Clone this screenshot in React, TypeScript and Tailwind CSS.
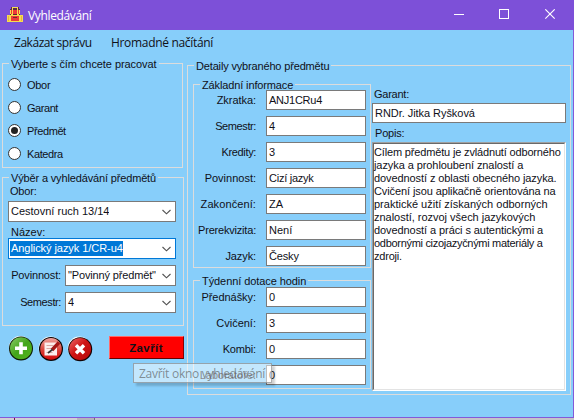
import React from "react";

type GroupProps = { title: string; tracking: string; className: string; children: React.ReactNode };

function Group({ title, tracking, className, children }: GroupProps) {
  return (
    <fieldset className={`min-w-0 border border-[#dcdcdc] ${className}`}>
      <legend className={`ml-[6px] h-[13px] whitespace-nowrap px-[2px] leading-[15px] ${tracking}`}>{title}</legend>
      {children}
    </fieldset>
  );
}

function Radio({ label, tracking, checked = false }: { label: string; tracking: string; checked?: boolean }) {
  return (
    <label className="flex h-[23px] items-center gap-[6px]">
      <span className="flex size-[13px] items-center justify-center rounded-full border border-[#333] bg-white">
        {checked && <span className="size-[7px] rounded-full bg-[#222]" />}
      </span>
      <span className={`pt-[2px] ${tracking}`}>{label}</span>
    </label>
  );
}

function Select({ value, tracking, className, active = false }: { value: string; tracking: string; className: string; active?: boolean }) {
  return (
    <div className={`flex h-[21px] items-center justify-between border bg-white pl-px pr-[4px] ${active ? "border-[#0078d7]" : "border-[#7a7a7a]"} ${className}`}>
      <span className="overflow-hidden">
        <span className={`block h-[15px] whitespace-nowrap pl-px leading-[15px] ${tracking} ${active ? "bg-[#0078d7] text-white" : ""}`}>{value}</span>
      </span>
      <svg width="9" height="6" viewBox="0 0 9 6" className="shrink-0" fill="none" stroke="#505050" strokeWidth="1.1">
        <path d="M0.5 1 4.5 4.8 8.5 1" />
      </svg>
    </div>
  );
}

function Field({ label, tracking, value, valueTracking = "" }: { label: string; tracking: string; value: string; valueTracking?: string }) {
  return (
    <div className="flex h-5 items-center">
      <span className={`w-[62px] whitespace-nowrap pt-px text-right ${tracking}`}>{label}</span>
      <span className="ml-[10px] flex h-5 w-[100px] items-center border border-[#7a7a7a] bg-white pl-[2px]">
        <span className={valueTracking}>{value}</span>
      </span>
    </div>
  );
}

function Backpack() {
  return (
    <svg width="16" height="16" viewBox="0 0 16 16" shapeRendering="crispEdges">
      <path d="M4 0h8v2h1v6h2v6h-14v-6h2v-6h1z" fill="#5b2a4a" />
      <path d="M5 0h6v1h-6zM5 1h1v2h-1zM10 1h1v2h-1z" fill="#f5dc50" />
      <path d="M3 3h10v11h-10z" fill="#f5dc50" />
      <path d="M4 3h8v4h-8z" fill="#ee3b38" />
      <path d="M5 3h1v5h-1zM10 3h1v5h-1z" fill="#f5dc50" />
      <path d="M0 8h3v7h-3zM13 8h3v7h-3z" fill="#f5dc50" />
      <path d="M1 9h1v5h-1zM14 9h1v5h-1z" fill="#e8b040" />
      <path d="M3 7h1v1h-1zM6 7h4v1h-4zM12 7h1v1h-1z" fill="#5b2a2a" />
      <path d="M4 9h8v5h-8z" fill="#ee3b38" />
      <path d="M6 10h4v1h-4z" fill="#742b28" />
      <path d="M3 14h10v1h-10z" fill="#f5dc50" />
    </svg>
  );
}

function ActionIcons() {
  return (
    <svg width="86" height="27" viewBox="0 0 86 27" className="shrink-0">
      <defs>
        <linearGradient id="green" x1="0" y1="0" x2="1" y2="1">
          <stop offset="0" stopColor="#8ccb67" />
          <stop offset=".5" stopColor="#43a51b" />
          <stop offset="1" stopColor="#55b51c" />
        </linearGradient>
        <linearGradient id="red" x1="0" y1="0" x2="1" y2="1">
          <stop offset="0" stopColor="#ec6a68" />
          <stop offset=".45" stopColor="#cf1515" />
          <stop offset="1" stopColor="#b50808" />
        </linearGradient>
        <linearGradient id="edit" x1="0" y1="0" x2="0" y2="1">
          <stop offset="0" stopColor="#efa29c" />
          <stop offset=".6" stopColor="#d93a32" />
          <stop offset="1" stopColor="#d30a0a" />
        </linearGradient>
      </defs>
      <circle cx="11.3" cy="11.6" r="11.5" fill="#fff" />
      <circle cx="12" cy="12.4" r="12" fill="#0c1a08" />
      <circle cx="12" cy="12.2" r="11" fill="url(#green)" />
      <path d="M12 6.2v12M6 12.2h12" stroke="#fff" strokeWidth="3.6" />
      <circle cx="41.3" cy="12.2" r="11.6" fill="#fff" />
      <circle cx="42" cy="13" r="12" fill="#0a0303" />
      <circle cx="42" cy="12.9" r="10.8" fill="url(#edit)" />
      <path d="M35.5 6.5h12.5v13h-12.5z" fill="#fbeeed" />
      <path d="M37.5 9.5h7M37.5 12.5h4.5M37.5 16.5h6" stroke="#dba8a4" />
      <path d="M50 6.5 43 14" stroke="#a41616" strokeWidth="3.4" />
      <path d="M43.5 13.5 39 17" stroke="#333" strokeWidth="1.6" />
      <circle cx="70.3" cy="12.2" r="11.6" fill="#fff" />
      <circle cx="71.2" cy="13.2" r="12" fill="#120202" />
      <circle cx="71.1" cy="13" r="11" fill="url(#red)" />
      <path d="M67 9.3 75 17.3M75 9.3 67 17.3" stroke="#fff" strokeWidth="3.4" />
    </svg>
  );
}

export default function App() {
  return (
    <div className="relative flex h-[420px] w-[574px] flex-col overflow-hidden bg-[#c4c4c8] font-['Liberation_Sans',Arial,sans-serif] text-[11px] leading-[13px] text-[#101018]">
      <header className="flex h-[30px] shrink-0 items-center bg-[#7d50d8] pl-[7px] font-['Open_Sans','Noto_Sans',sans-serif] text-[12px] text-white">
        <Backpack />
        <span className="ml-[5px] flex-1 tracking-[-0.35px]">Vyhledávání</span>
        <svg width="102" height="12" viewBox="0 0 102 12" className="mr-[18px]" fill="none" stroke="#fff">
          <path d="M0 5.5h10M45.5 0.5h9v9h-9z" shapeRendering="crispEdges" />
          <path d="M91.3 0.3l9.4 9.4M100.7 0.3l-9.4 9.4" strokeWidth="1.1" />
        </svg>
      </header>

      <main className="flex h-[388px] shrink-0 flex-col border-b border-r border-[#8459d8] bg-[#87cefa]">
        <nav className="flex h-[27px] items-center gap-[20px] pb-[3px] pl-[14px] font-['Open_Sans','Noto_Sans',sans-serif] text-[12px]">
          <span className="w-[77px] whitespace-nowrap tracking-[-0.46px]">Zakázat správu</span>
          <span className="whitespace-nowrap tracking-[-0.32px]">Hromadné načítání</span>
        </nav>

        <div className="flex pl-[2px]">
          <div className="flex w-[182px] flex-col">
            <Group title="Vyberte s čím chcete pracovat" tracking="tracking-[-0.07px]" className="h-[111px] w-[181px]">
              <div className="pl-[5px] pt-[3px]">
                <Radio label="Obor" tracking="tracking-[-0.3px]" />
                <Radio label="Garant" tracking="tracking-[-0.45px]" />
                <Radio label="Předmět" tracking="tracking-[-0.4px]" checked />
                <Radio label="Katedra" tracking="tracking-[-0.4px]" />
              </div>
            </Group>

            <Group title="Výběr a vyhledávání předmětů" tracking="tracking-[-0.15px]" className="mt-[3px] h-[155px] w-[182px]">
              <div className="flex flex-col pl-[5px] pt-px">
                <span className="pl-[2px] tracking-[-0.2px]">Obor:</span>
                <Select value="Cestovní ruch 13/14" tracking="" className="mt-[3px] w-[168px]" />
                <span className="-mb-px mt-[4px] pl-[3px]">Název:</span>
                <Select value="Anglický jazyk 1/CR-u4" tracking="tracking-[-0.06px]" className="w-[168px]" active />
                <div className="mt-[6px] flex items-center">
                  <span className="w-[53px] whitespace-nowrap text-right tracking-[-0.15px]">Povinnost:</span>
                  <Select value={'"Povinný předmět"'} tracking="tracking-[-0.15px]" className="ml-[4px] w-[111px]" />
                </div>
                <div className="mt-[6px] flex items-center">
                  <span className="w-[53px] text-right tracking-[-0.4px]">Semestr:</span>
                  <Select value="4" tracking="" className="ml-[4px] w-[111px]" />
                </div>
              </div>
            </Group>

            <div className="mt-[10px] flex pl-[7px]">
              <ActionIcons />
              <button className="ml-[14px] h-[23px] w-[75px] shrink-0 border border-b-[#600] border-l-[#ff6a6a] border-r-[#800] border-t-[#ff6a6a] bg-[#f00] pr-[1px] pt-[2px] text-[11.5px] font-bold leading-[13px] tracking-[0.4px]">
                Zavřít
              </button>
            </div>
          </div>

          <Group title="Detaily vybraného předmětu" tracking="tracking-[-0.16px]" className="ml-[3px] mt-[2px] h-[336px] w-[384px]">
            <div className="flex gap-px pl-[5px] pt-[6px]">
              <div className="w-[178px]">
                <Group title="Základní informace" tracking="tracking-[-0.13px]" className="h-[190px] w-[178px]">
                  <div className="-mt-px flex flex-col gap-[6px]">
                    <Field label="Zkratka:" tracking="tracking-[-0.05px]" value="ANJ1CRu4" valueTracking="tracking-[-0.25px]" />
                    <Field label="Semestr:" tracking="tracking-[-0.4px]" value="4" />
                    <Field label="Kredity:" tracking="tracking-[-0.35px]" value="3" />
                    <Field label="Povinnost:" tracking="" value="Cizí jazyk" valueTracking="tracking-[-0.25px]" />
                    <Field label="Zakončení:" tracking="tracking-[0.1px]" value="ZA" />
                    <Field label="Prerekvizita:" tracking="tracking-[-0.2px]" value="Není" />
                    <Field label="Jazyk:" tracking="tracking-[-0.1px]" value="Česky" valueTracking="tracking-[-0.15px]" />
                  </div>
                </Group>
                <Group title="Týdenní dotace hodin" tracking="tracking-[-0.08px]" className="mt-[6px] h-[115px] w-[178px]">
                  <div className="flex flex-col gap-[6px]">
                    <Field label="Přednášky:" tracking="tracking-[-0.05px]" value="0" />
                    <Field label="Cvičení:" tracking="" value="3" />
                    <Field label="Kombi:" tracking="tracking-[-0.15px]" value="0" />
                    <Field label="Laboratoře:" tracking="" value="0" />
                  </div>
                </Group>
              </div>

              <div className="flex w-[194px] flex-col pt-[10px]">
                <span className="pl-[2px] tracking-[-0.25px]">Garant:</span>
                <div className="mt-[2px] flex h-5 items-center border border-[#7a7a7a] bg-white pl-[2px] tracking-[-0.05px]">RNDr. Jitka Ryšková</div>
                <span className="mt-[4px] pl-[3px] tracking-[-0.2px]">Popis:</span>
                <div className="mt-[2px] h-[249px] border border-b-white border-l-[#a0a0a0] border-r-white border-t-[#a0a0a0]">
                  <div className="h-full whitespace-nowrap border border-b-[#e3e3e3] border-l-[#696969] border-r-[#e3e3e3] border-t-[#696969] bg-white pt-[2px]">
                    <p className="tracking-[-0.16px]">Cílem předmětu je zvládnutí odborného</p>
                    <p className="tracking-[-0.08px]">jazyka a prohloubení znalostí a</p>
                    <p className="tracking-[-0.09px]">dovedností z oblasti obecného jazyka.</p>
                    <p className="tracking-[-0.1px]">Cvičení jsou aplikačně orientována na</p>
                    <p>praktické užití získaných odborných</p>
                    <p className="tracking-[-0.02px]">znalostí, rozvoj všech jazykových</p>
                    <p className="tracking-[-0.08px]">dovedností a práci s autentickými a</p>
                    <p className="tracking-[-0.3px]">odbornými cizojazyčnými materiály a</p>
                    <p className="tracking-[-0.2px]">zdroji.</p>
                  </div>
                </div>
              </div>
            </div>
          </Group>
        </div>
      </main>

      <footer className="flex h-[2px]">
        <span className="w-[14px] bg-[#d0d0d4]" />
        <span className="w-px bg-[#7a1050]" />
        <span className="w-[62px] bg-[#cfcfd3]" />
        <span className="w-[17px] bg-[#b4b4b8]" />
        <span className="w-px bg-[#707078]" />
      </footer>

      <div className="absolute left-[133px] top-[363px] flex h-5 w-[139px] items-center whitespace-nowrap border border-[#767676]/60 bg-white/50 pl-[5px] font-['Open_Sans','Noto_Sans',sans-serif] text-[12px] tracking-[-0.27px] text-[#575757]/65 shadow-[3px_3px_2px_rgba(0,0,0,0.18)]">
        Zavřít okno vyhledávání
      </div>
    </div>
  );
}
